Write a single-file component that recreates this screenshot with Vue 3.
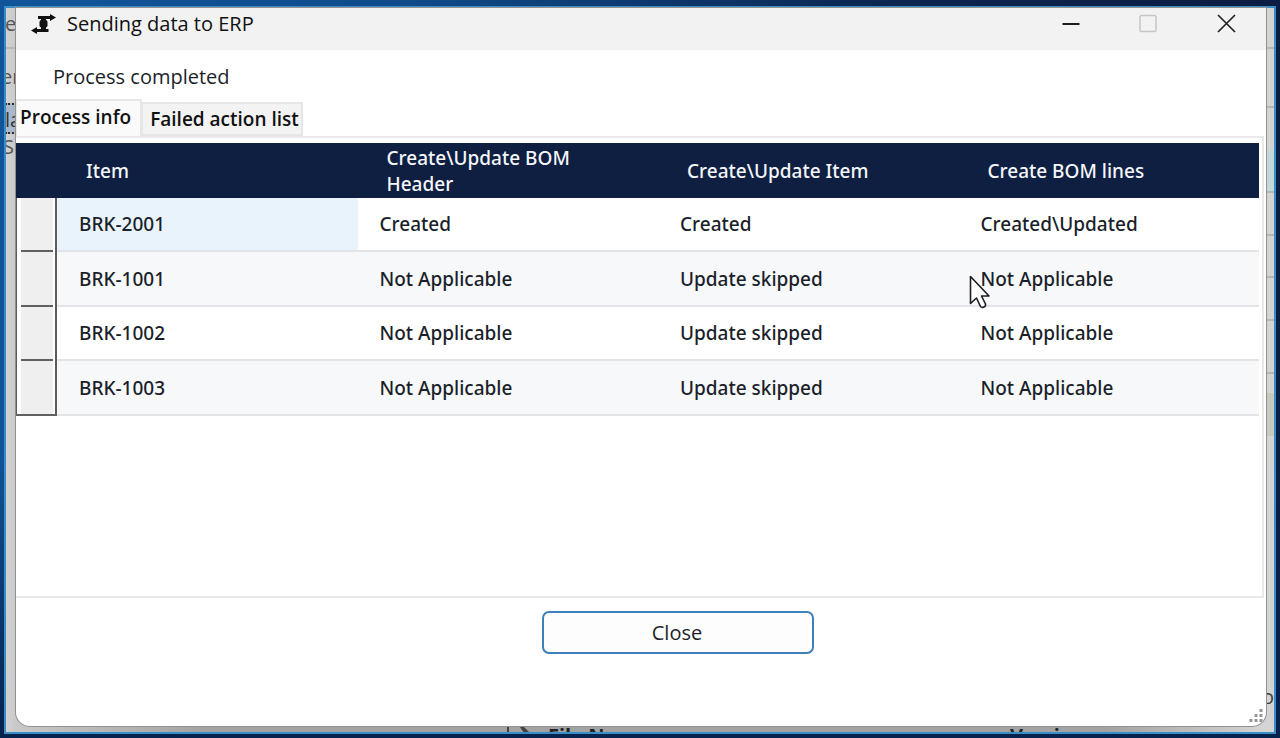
<script setup>
import { ref } from 'vue'

const columns = ['Item', 'Create\\Update BOM Header', 'Create\\Update Item', 'Create BOM lines']
const rows = [
  ['BRK-2001', 'Created', 'Created', 'Created\\Updated'],
  ['BRK-1001', 'Not Applicable', 'Update skipped', 'Not Applicable'],
  ['BRK-1002', 'Not Applicable', 'Update skipped', 'Not Applicable'],
  ['BRK-1003', 'Not Applicable', 'Update skipped', 'Not Applicable'],
]
const tab = ref('info')
</script>

<template>
  <div class="desktop">
    <div class="host">
      <div class="behind" aria-hidden="true">
        <span class="peek p1">e</span>
        <span class="peek p2">er</span>
        <span class="peek p3">la</span>
        <span class="peek p4">Se</span>
        <span class="peek p5">o</span>
        <i class="line l1"></i><i class="line l2"></i><i class="line l3"></i><i class="line l4"></i>
        <i class="line l5"></i><i class="line l6"></i><i class="line l7"></i><i class="line l8"></i>
        <i class="tint t1"></i><i class="tint t2"></i>
        <i class="bar"></i>
        <svg class="doc" width="12" height="14" viewBox="0 0 12 14"><path d="M1 1h4l6 6H5z" fill="#444" /></svg>
        <span class="peek b1">File Name</span>
        <span class="peek b2">Version</span>
      </div>

      <main class="dialog">
        <header class="titlebar">
          <svg class="logo" width="28" height="20" viewBox="0 0 28 20" fill="#111">
            <path d="M8 2h12V0l6 3.500L20 7V5H8z" />
            <path d="M18.500 18H7v2l-6-3.500L7 13v2h11.500z" />
            <rect x="9.500" y="6" width="8" height="7.500" rx="2" />
            <path d="M11 4h5v3h-5zM11 13h5v3h-5z" />
          </svg>
          <h1>Sending data to ERP</h1>
          <div class="controls">
            <button type="button" aria-label="Minimize">
              <svg width="20" height="20" viewBox="0 0 20 20"><path d="M2.500 10h17" stroke="#1d1d1d" stroke-width="2" /></svg>
            </button>
            <button type="button" aria-label="Maximize" disabled>
              <svg width="20" height="20" viewBox="0 0 20 20"><rect x="2" y="1.500" width="16" height="16" rx="1.500" fill="none" stroke="#c6c6c6" stroke-width="1.500" /></svg>
            </button>
            <button type="button" aria-label="Close window">
              <svg width="20" height="20" viewBox="0 0 20 20"><path d="M2 1l17 17M19 1l-17 17" stroke="#222" stroke-width="1.700" /></svg>
            </button>
          </div>
        </header>

        <p class="status">Process completed</p>

        <div class="tabs" role="tablist">
          <button type="button" role="tab" class="tab" :class="{ active: tab === 'info' }" :aria-selected="tab === 'info'" @click="tab = 'info'">Process info</button>
          <button type="button" role="tab" class="tab" :class="{ active: tab === 'failed' }" :aria-selected="tab === 'failed'" @click="tab = 'failed'">Failed action list</button>
        </div>

        <section class="panel" role="tabpanel">
          <table v-if="tab === 'info'">
            <colgroup><col class="grip-col" /><col v-for="c in columns" :key="c" /></colgroup>
            <thead>
              <tr>
                <th></th>
                <th v-for="c in columns" :key="c" scope="col">{{ c }}</th>
              </tr>
            </thead>
            <tbody>
              <tr v-for="(row, r) in rows" :key="row[0]">
                <td class="grip"><div></div></td>
                <td v-for="(cell, c) in row" :key="c" :class="{ selected: r === 0 && c === 0 }">{{ cell }}</td>
              </tr>
            </tbody>
          </table>
        </section>

        <footer class="footer">
          <button type="button" class="close">Close</button>
        </footer>

        <svg class="resize" width="14" height="14" viewBox="0 0 14 14" fill="#969696">
          <path d="M10.500 0h3v3h-3zM5.500 5h3v3h-3zM10.500 5h3v3h-3zM.5 10h3v3h-3zM5.500 10h3v3h-3zM10.500 10h3v3h-3z" />
        </svg>
      </main>
      <svg class="pointer" width="22" height="34" viewBox="0 0 22 34">
        <path d="M1.500 1.500v27l6-5.500 4 8.500q1.500 1.500 3.500 0.500t1.500-3l-4-8h7.500z" fill="#fff" stroke="#1c1c24" stroke-width="1.600" stroke-linejoin="round" />
      </svg>
    </div>
  </div>
</template>

<style>
body {
  margin: 0;
}
</style>

<style scoped>
* {
  box-sizing: border-box;
}
.desktop {
  display: flex;
  min-height: 100vh;
  padding: 6px 4px 4px;
  font-family: "Open Sans", "Noto Sans", sans-serif;
  font-size: 20px;
  line-height: 26px;
  color: #1b1f2a;
  background: linear-gradient(to bottom, transparent 60%, #06224e 100%), linear-gradient(to right, #10559a 0%, #104c8c 30%, #0c2650 70%, #0c1d42 100%);
}
button {
  font: inherit;
  color: inherit;
}
.host {
  position: relative;
  display: flex;
  flex: 1;
  min-width: 0;
  padding: 0 8px 6px 10px;
  border: 2px solid #3a8cc4;
  background: #cfcfcf;
}
.behind {
  position: absolute;
  inset: 0;
  overflow: hidden;
  background: linear-gradient(to right, #d2d2d2, #c9c9c9 10px, #a3a3a3 200px, #a3a3a3 1100px, #d4d4d4 99%);
}
.peek {
  position: absolute;
  color: #555;
}
.p1 { left: -1px; top: 3px; }
.p2 { left: -5px; top: 56px; }
.p3 { left: -1px; top: 95px; height: 31px; line-height: 29px; color: #333; background: #a9b9cb; border-top: 2px dotted #33291c; border-bottom: 2px dotted #33291c; }
.p4 { left: -3px; top: 126px; }
.p5 { right: 0; bottom: 22px; color: #3c3c3c; }
.b1 { left: 542px; top: 715px; font-weight: 700; color: #222; }
.b2 { left: 1004px; top: 715px; font-weight: 700; color: #222; }
.doc { position: absolute; left: 513px; top: 718px; }
.bar { position: absolute; left: 501px; bottom: 0; width: 2px; height: 7px; background: #444; }
.line { position: absolute; right: 0; width: 10px; height: 2px; background: #b6b6b6; }
.l1 { top: 39px; }
.l2 { top: 98px; }
.l3 { top: 183px; }
.l4 { top: 226px; }
.l5 { top: 268px; }
.l6 { top: 311px; }
.l7 { top: 364px; }
.l8 { left: 0; top: 39px; }
.tint { position: absolute; right: 0; width: 9px; }
.t1 { top: 142px; height: 41px; background: #c3d8d9; }
.t2 { top: 385px; height: 43px; background: #c8c9bf; }

.dialog {
  position: relative;
  display: flex;
  flex: 1;
  flex-direction: column;
  min-width: 0;
  overflow: hidden;
  background: #fff;
  border-radius: 0 0 14px 14px;
  box-shadow: 0 0 0 1px #929292;
}
.titlebar {
  display: flex;
  align-items: center;
  height: 42px;
  padding: 0 18px 10px 14px;
  background: #f2f2f2;
}
.logo {
  margin-right: 9px;
}
h1 {
  margin: 0;
  flex: 1;
  font-size: 20px;
  font-weight: 400;
  color: #111;
}
.controls {
  display: flex;
  gap: 34px;
}
.controls button {
  display: flex;
  padding: 0 12px;
  border: 0;
  background: none;
}
.status {
  margin: 14px 0 9px 37px;
}
.tabs {
  display: flex;
  align-items: flex-end;
}
.tab {
  height: 34px;
  padding: 0 2px 0 7px;
  border: 2px solid #e6e6e6;
  border-left: 1px solid #e6e6e6;
  background: #f3f3f3;
  font-size: 19px;
  font-weight: 600;
  line-height: 26px;
  color: #111;
}
.tab.active {
  height: 37px;
  padding: 0 9px 4px 3px;
  border-bottom: 0;
  background: #fafafa;
}
.panel {
  flex: 1;
  margin-right: 2px;
  padding: 5px 3px 4px 0;
  border: 2px solid #e9e9e9;
  border-left: 0;
  background: #fff;
}
table {
  width: 100%;
  table-layout: fixed;
  border-collapse: separate;
  border-spacing: 0;
  font-family: "Noto Sans", "Open Sans", sans-serif;
  font-size: 19px;
}
.grip-col {
  width: 41px;
}
th {
  height: 55px;
  padding: 0 60px 0 29px;
  background: #0f1f41;
  color: #f4f6fa;
  font-weight: 500;
  text-align: left;
  vertical-align: middle;
}
td {
  height: 54px;
  padding: 0 0 0 22px;
  border-bottom: 2px solid #e2e4e8;
  font-weight: 500;
}
tbody tr:nth-child(even) td {
  height: 55px;
  background: #f6f8fa;
}
td.selected {
  background: #e8f3fc;
}
tbody tr td.grip,
tbody tr:nth-child(even) td.grip {
  padding: 0 2px 0 4px;
  border: solid #5c5c5c;
  border-width: 0 2px 0 1px;
  background: #fff;
}
.grip div {
  height: 100%;
  min-height: 54px;
  background: #efefef;
  border-bottom: 2px solid #606060;
}
tbody tr:last-child td.grip {
  border-bottom: 2px solid #606060;
}
tbody tr:last-child .grip div {
  min-height: 53px;
  border-bottom: 0;
}
.footer {
  display: flex;
  justify-content: center;
  height: 128px;
  padding: 13px 0 0 74px;
}
.close {
  width: 272px;
  height: 43px;
  padding: 0 2px 0 0;
  border: 2px solid #3f80b8;
  border-radius: 7px;
  background: #fdfdfd;
}
.resize {
  position: absolute;
  right: 3px;
  bottom: 3px;
}
.pointer {
  position: absolute;
  left: 963px;
  top: 267px;
}
</style>
